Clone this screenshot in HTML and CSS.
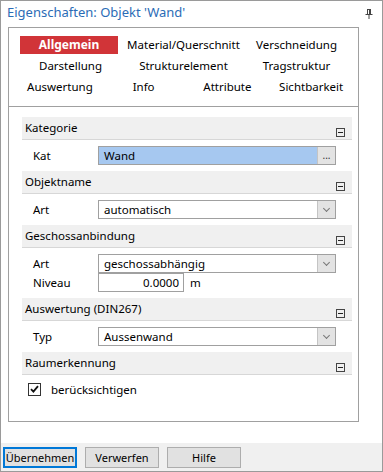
FILE: index.html
```html
<!DOCTYPE html>
<html lang="de">
<head>
  <meta charset="UTF-8" />
  <meta name="viewport" content="width=device-width, initial-scale=1.0"/>
  <title>Eigenschaften</title>
  <link rel="stylesheet" href="styles.css">
</head>
<body>

  <div class="window">

    <!-- Title bar -->
    <div class="titlebar">
      <span class="title">Eigenschaften: Objekt 'Wand'</span>
      <svg class="pin" width="8" height="10" viewBox="0 0 8 10">
        <path d="M2 0.5h4M2.5 0.5v5M5.5 0.5v5M4.5 0.5v5M0.5 5.5h7M4 5.5v4.5" stroke="#444" stroke-width="1" fill="none"/>
      </svg>
    </div>

    <div class="panel">

      <!-- Tabs -->
      <div class="tabs">
        <div class="tab-row cols-3">
          <span class="tab active">Allgemein</span>
          <span class="tab">Material/Querschnitt</span>
          <span class="tab">Verschneidung</span>
        </div>
        <div class="tab-row cols-3">
          <span class="tab">Darstellung</span>
          <span class="tab">Strukturelement</span>
          <span class="tab">Tragstruktur</span>
        </div>
        <div class="tab-row cols-4">
          <span class="tab">Auswertung</span>
          <span class="tab">Info</span>
          <span class="tab">Attribute</span>
          <span class="tab">Sichtbarkeit</span>
        </div>
      </div>

      <!-- Property groups -->
      <div class="groups">

        <div class="group">
          <div class="group-head"><span>Kategorie</span><span class="collapse"></span></div>
          <div class="group-body">
            <div class="prop">
              <span class="prop-label">Kat</span>
              <div class="field selected"><span class="value">Wand</span><span class="field-btn dots">...</span></div>
            </div>
          </div>
        </div>

        <div class="group">
          <div class="group-head"><span>Objektname</span><span class="collapse"></span></div>
          <div class="group-body">
            <div class="prop">
              <span class="prop-label">Art</span>
              <div class="field"><span class="value">automatisch</span><span class="field-btn"><span class="chevron"></span></span></div>
            </div>
          </div>
        </div>

        <div class="group">
          <div class="group-head"><span>Geschossanbindung</span><span class="collapse"></span></div>
          <div class="group-body">
            <div class="prop">
              <span class="prop-label">Art</span>
              <div class="field"><span class="value">geschossabhängig</span><span class="field-btn"><span class="chevron"></span></span></div>
            </div>
            <div class="prop">
              <span class="prop-label">Niveau</span>
              <div class="field number"><span class="value">0.0000</span></div>
              <span class="unit">m</span>
            </div>
          </div>
        </div>

        <div class="group">
          <div class="group-head"><span>Auswertung (DIN267)</span><span class="collapse"></span></div>
          <div class="group-body">
            <div class="prop">
              <span class="prop-label">Typ</span>
              <div class="field"><span class="value">Aussenwand</span><span class="field-btn"><span class="chevron"></span></span></div>
            </div>
          </div>
        </div>

        <div class="group">
          <div class="group-head"><span>Raumerkennung</span><span class="collapse"></span></div>
          <div class="group-body">
            <label class="check">
              <span class="box">
                <svg width="9" height="8" viewBox="0 0 9 8"><path d="M1 4.2l2.4 2.4L8 1.2" stroke="#111" stroke-width="1.8" fill="none"/></svg>
              </span>
              berücksichtigen
            </label>
          </div>
        </div>

      </div>
    </div>

    <!-- Buttons -->
    <div class="buttons">
      <button class="default">Übernehmen</button>
      <button>Verwerfen</button>
      <button>Hilfe</button>
    </div>

  </div>

</body>
</html>
```

FILE: styles.css
```css
body {
  margin: 0;
  font-family: "Noto Sans", "Open Sans", sans-serif;
  font-size: 11px;
  color: #000;
}

.window {
  width: 383px;
  height: 472px;
  box-sizing: border-box;
  border: 1px solid #9a9a9a;
  background: #fff;
  display: flex;
  flex-direction: column;
}

.titlebar {
  height: 26px;
  display: flex;
  justify-content: space-between;
  padding: 0 9px 0 6px;
}

.title {
  color: #2b6cb6;
  font-size: 13px;
  line-height: 26px;
  margin-top: -2px;
}

.pin {
  margin-top: 8px;
}

.panel {
  margin-left: 7px;
  width: 351px;
  height: 395px;
  box-sizing: border-box;
  border: 1px solid #a0a0a0;
}

/* Tabs */
.tabs {
  padding: 8px 5px 0 5px;
  height: 70px;
  border-bottom: 1px solid #a0a0a0;
}

.tab-row {
  display: grid;
  height: 18px;
  margin-bottom: 3px;
  align-items: center;
}

.cols-3 {
  grid-template-columns: repeat(3, 1fr);
}

.cols-4 {
  grid-template-columns: repeat(4, 1fr);
  padding-left: 4px;
}

.tab {
  justify-self: center;
  line-height: 18px;
  white-space: nowrap;
  font-size: 11.5px;
}

.tab.active {
  justify-self: start;
  margin-left: 6px;
  width: 98px;
  text-align: center;
  background: #d13438;
  color: #fff;
  font-weight: bold;
  font-size: 12px;
}

/* Groups */
.groups {
  padding: 10px 6px 0 13px;
}

.group-head {
  height: 22px;
  background: #f0f0f0;
  border-bottom: 1px solid #d7d7d7;
  display: flex;
  justify-content: space-between;
  align-items: flex-end;
  padding: 0 7px 0 3px;
}

.group-head span:first-child {
  line-height: 22px;
  align-self: center;
  font-size: 11.5px;
}

.collapse {
  width: 7px;
  height: 7px;
  border: 1px solid #444;
  margin-bottom: 2px;
  position: relative;
}

.collapse::after {
  content: "";
  position: absolute;
  left: 1px;
  right: 1px;
  top: 3px;
  height: 1px;
  background: #222;
}

.group-body {
  padding: 6px 0 6px 0;
}

.prop {
  display: flex;
  align-items: center;
  height: 19px;
  font-size: 11.5px;
}

.prop-label {
  width: 65px;
  padding-left: 11px;
}

.field {
  width: 238px;
  height: 19px;
  box-sizing: border-box;
  border: 1px solid #a0a0a0;
  display: flex;
  background: #fff;
}

.prop + .prop .field {
  margin-top: -1px;
}

.field .value {
  flex: 1;
  padding-left: 5px;
  line-height: 17px;
}

.field.selected {
  background: #a6c8f0;
}

.field-btn {
  width: 17px;
  background: #e3e3e3;
  border-left: 1px solid #c4c4c4;
  display: flex;
  align-items: center;
  justify-content: center;
}

.dots {
  font-size: 10px;
  line-height: 17px;
  color: #333;
}

.chevron {
  width: 4px;
  height: 4px;
  border-right: 1px solid #777;
  border-bottom: 1px solid #777;
  transform: rotate(45deg);
  margin-top: -3px;
}

.field.number {
  width: 86px;
}

.field.number .value {
  text-align: right;
  padding-right: 4px;
}

.unit {
  margin-left: 6px;
}

.check {
  display: flex;
  align-items: center;
  height: 20px;
  margin: -2px 0 0 6px;
  font-size: 11.5px;
}

.check .box {
  width: 13px;
  height: 13px;
  box-sizing: border-box;
  border: 1px solid #333;
  display: flex;
  align-items: center;
  justify-content: center;
  margin-right: 10px;
}

/* Bottom buttons */
.buttons {
  margin-top: auto;
  height: 28px;
  background: #f0f0f0;
  display: flex;
  align-items: center;
  gap: 8px;
  padding-left: 2px;
}

button {
  width: 74px;
  height: 21px;
  box-sizing: border-box;
  border: 1px solid #adadad;
  background: #e1e1e1;
  font-family: inherit;
  font-size: 11px;
  padding: 0;
  color: #000;
}

button.default {
  border: 2px solid #0078d7;
}
```
